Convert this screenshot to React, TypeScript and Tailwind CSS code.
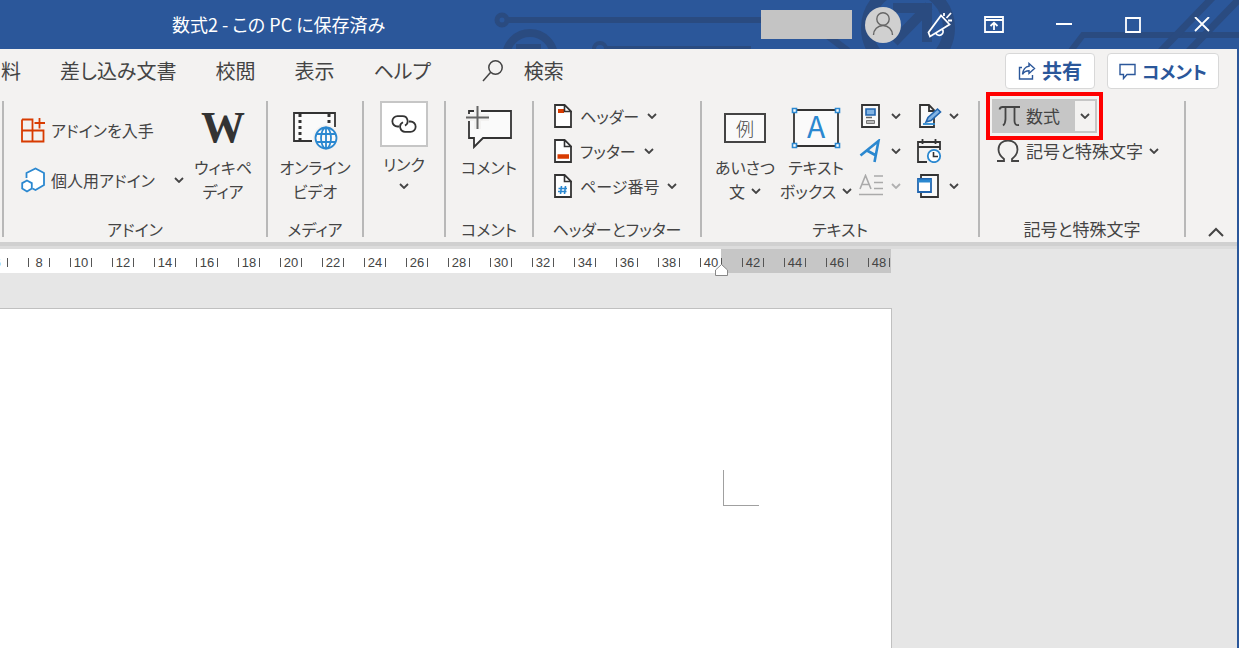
import type { ReactNode } from "react";

const TABS = ["料", "差し込み文書", "校閲", "表示", "ヘルプ"];
const RULER_TEXT = [6, 8, 10, 12, 14, 16, 18, 20, 22, 24, 26, 28, 30, 32, 34, 36, 38, 40];
const RULER_MARGIN = [42, 44, 46, 48];

export default function App() {
  return (
    <div className="flex min-h-screen flex-col overflow-hidden bg-[#e6e6e6] font-['Noto_Sans_CJK_JP',sans-serif] text-base text-[#444] [font-feature-settings:'palt']">
      <TitleBar />
      <div className="flex flex-1 flex-col border-r-2 border-[#2b579a]">
        <TabBar />
        <Ribbon />
        <Ruler />
        <main className="flex flex-1 pt-[35px]">
          <div className="w-[892px] border-t border-r border-[#c0c0c0] bg-white pt-[161px]">
            {/* crop mark at the margin corner */}
            <div className="ml-[723px] h-9 w-9 border-b border-l border-[#a0a0a0]" />
          </div>
        </main>
      </div>
    </div>
  );
}

function TitleBar() {
  return (
    <header className="relative flex h-[49px] items-center overflow-hidden bg-[#2b579a] pl-[172px] text-white">
      <svg className="absolute top-0 right-0" width="779" height="49" viewBox="460 0 779 49" fill="none" stroke="#2a4b80">
        <circle cx="502" cy="20" r="5" strokeWidth="5" />
        <path d="M508 20H780" strokeWidth="6" />
        <circle cx="530" cy="57" r="24" strokeWidth="8" />
        <path d="M516 47h25M606 49h145" strokeWidth="6" />
        <circle cx="600" cy="49" r="6" strokeWidth="4" />
        <path d="M828 36l20 15" strokeWidth="7" />
        <circle cx="908" cy="28" r="41" strokeWidth="12" />
        <path d="M893 8h34v34M929 6l-35 36" strokeWidth="10" />
        <path d="M1070 52l13-17h156" strokeWidth="6" />
        <path d="M1160 52l54-56M1188 52l54-56" strokeWidth="7" />
      </svg>
      <h1 className="relative pb-0.5 text-lg">数式2 - この PC に保存済み</h1>
      <div className="relative ml-auto flex items-center">
        <div className="h-[29px] w-[91px] bg-[#c4c4c4]" />
        <button aria-label="アカウント" className="ml-[13px] flex size-9 items-center justify-center rounded-full bg-[#d0d0d0]">
          <svg width="24" height="26" viewBox="0 0 24 26" fill="none" stroke="#666" strokeWidth="1.4">
            <circle cx="12" cy="7" r="6.2" />
            <path d="M2.500 23a9.500 9.500 0 0 1 19 0" />
          </svg>
        </button>
        <button aria-label="近日公開の機能" className="ml-[26px]">
          <svg width="26" height="28" viewBox="0 0 26 28" fill="none" stroke="#fff" strokeWidth="1.8">
            <path d="M14 4.500L1.500 21.500l1.500 4L22.500 13.500zM9 22.500a3.300 3.300 0 0 0 6.500-4M17 5V2M19.500 7l4.500-5M21 9.500h4" />
          </svg>
        </button>
        <button aria-label="リボンの表示オプション" className="ml-[31px]">
          <svg width="20" height="17" viewBox="0 0 20 17" fill="none" stroke="#fff" strokeWidth="1.8">
            <path d="M1 1h18v15H1zM1 4h18M10 14V7M6.500 10L10 6.700l3.500 3.300" />
          </svg>
        </button>
        <button aria-label="最小化" className="ml-[51px]">
          <svg width="18" height="18" viewBox="0 0 18 18" stroke="#fff" strokeWidth="2">
            <path d="M1 8h16" />
          </svg>
        </button>
        <button aria-label="元に戻す" className="ml-[52px]">
          <svg width="16" height="16" viewBox="0 0 16 16" fill="none" stroke="#fff" strokeWidth="1.8">
            <path d="M1 1h14v14H1z" />
          </svg>
        </button>
        <button aria-label="閉じる" className="mr-[29px] ml-[53px]">
          <svg width="16" height="16" viewBox="0 0 16 16" stroke="#fff" strokeWidth="1.8">
            <path d="M1 0l14 14M15 0L1 14" />
          </svg>
        </button>
      </div>
    </header>
  );
}

function TabBar() {
  return (
    <nav className="flex h-[46px] items-center bg-[#f3f2f1] pb-0.5 pl-px text-xl">
      <div className="flex gap-[39px]">
        {TABS.map((tab) => (
          <button key={tab}>{tab}</button>
        ))}
      </div>
      <button className="ml-[51px] flex items-center gap-5">
        <svg width="22" height="22" viewBox="0 0 22 22" fill="none" stroke="#444" strokeWidth="1.500">
          <circle cx="13.500" cy="7.500" r="6.700" />
          <path d="M8.700 12.300L1 21" />
        </svg>
        検索
      </button>
      <div className="mr-[18px] ml-auto flex gap-3 font-bold text-[#2b579a]">
        <button className="flex h-9 w-[90px] items-center justify-center gap-1.5 rounded-sm border border-[#d8d8d8] bg-white">
          <svg width="18" height="18" viewBox="0 0 18 18" fill="none" stroke="#2b579a" strokeWidth="1.400">
            <path d="M4 5.500H1.500V17h13v-4M11 1.500l5.500 5-5.500 5V8.800c-3 0-5 1-6.500 3.500.3-4.500 3-8 6.500-8z" />
          </svg>
          共有
        </button>
        <button className="flex h-9 w-[112px] items-center justify-center gap-1.5 rounded-sm border border-[#d8d8d8] bg-white text-lg">
          <svg width="17" height="17" viewBox="0 0 17 17" fill="none" stroke="#2b579a" strokeWidth="1.400">
            <path d="M1 1.500h15v10H8L4.500 15.500v-4H1z" />
          </svg>
          コメント
        </button>
      </div>
    </nav>
  );
}

function Ribbon() {
  return (
    <section className="flex border-b-4 border-[#d0d0d0] bg-[#f3f2f1] pt-1.5 pb-[5px]">
      <Group label="アドイン" className="ml-0.5 w-[264px]">
        <div className="w-[184px] pt-1 pl-[17px]">
          <button className="flex h-[50px] items-center gap-1.5">
            <svg width="24" height="26" viewBox="0 0 24 26" fill="none" stroke="#d83b01" strokeWidth="1.8">
              <path d="M1 2.500h10.500v22M1 2.500v22h21.500V13.500H1M18.500 1v10.500M13.500 6H24" />
            </svg>
            アドインを入手
          </button>
          <button className="flex h-[50px] w-[163px] items-center gap-1.5">
            <svg width="24" height="26" viewBox="0 0 24 26" fill="#fff" stroke="#2b88d0" strokeWidth="1.8">
              <path d="M5.500 11V6L14.500 1.500 23 6v12L14.500 23l-3-1.500" />
              <path d="M6 13.500l4.800 2.600v5.500L6 24.500l-4.800-2.900v-5.500z" />
            </svg>
            個人用アドイン
            <Chevron className="ml-auto" />
          </button>
        </div>
        <BigButton
          className="w-[70px]"
          icon={<span className="font-['Liberation_Serif',serif] text-[44px] leading-[54px] font-bold text-[#333]">W</span>}
          lines={["ウィキペ", "ディア"]}
        />
      </Group>

      <Group label="メディア" className="w-24">
        <BigButton
          className="w-full"
          icon={
            <svg width="46" height="44" viewBox="0 0 46 44" fill="none">
              <path d="M2 7h41v28H2z" fill="#fafafa" />
              <path d="M20 35H2V7h41v14" stroke="#333" strokeWidth="1.8" />
              <path d="M8 8v27M37 8v10" stroke="#333" strokeWidth="3" strokeDasharray="3 3" />
              <g stroke="#2b88d0" strokeWidth="1.8">
                <circle cx="34" cy="32" r="13" fill="#f3f2f1" stroke="none" />
                <circle cx="34" cy="32" r="10.500" fill="#fafafa" />
                <ellipse cx="34" cy="32" rx="5" ry="10.500" />
                <path d="M34 21v22M25 28h18M25 36h18" />
              </g>
            </svg>
          }
          lines={["オンライン", "ビデオ"]}
        />
      </Group>

      <Group label="" className="w-[82px]">
        <button className="flex w-full flex-col items-center leading-[34px]">
          <span className="flex h-[46px] w-12 items-center justify-center border-2 border-[#c6c6c6] bg-white">
            <svg width="26" height="18" viewBox="0 0 26 18" fill="none" stroke="#333" strokeWidth="1.8">
              <path d="M8 11.500H6.500a5 5 0 0 1 0-10.300h5a5 5 0 0 1 2.500 9.400M18 6.500h1.500a5 5 0 0 1 0 10.300h-5a5 5 0 0 1-2.500-9.500" />
            </svg>
          </span>
          リンク
          <Chevron className="mt-0.5" />
        </button>
      </Group>

      <Group label="コメント" className="w-[88px]">
        <BigButton
          className="w-full"
          icon={
            <svg width="48" height="46" viewBox="0 0 48 46" fill="none" strokeWidth="1.8">
              <path d="M4 6h42v27H18L9 42v-9H4z" fill="#fafafa" stroke="#333" />
              <path d="M12.500 0v24M0 12.500h24" stroke="#f3f2f1" strokeWidth="7" />
              <path d="M12.500 1v23M1 12.500h23" stroke="#666" strokeWidth="2" />
            </svg>
          }
          lines={["コメント"]}
        />
      </Group>

      <Group label="ヘッダーとフッター" className="w-[168px]">
        <div className="flex flex-col gap-[5px] pl-5">
          <SmallButton label="ヘッダー" icon={<PageIcon><path d="M4 7h6" stroke="#d83b01" strokeWidth="4" /></PageIcon>} />
          <SmallButton label="フッター" icon={<PageIcon><path d="M3.500 17.500h11.500" stroke="#d83b01" strokeWidth="4.500" /></PageIcon>} />
          <SmallButton
            label="ページ番号"
            icon={<PageIcon><path d="M7.500 12l-1 8M11.500 12l-1 8M4.500 14.500H13M4 17.500h8.500" stroke="#2b88d0" strokeWidth="1.600" /></PageIcon>}
          />
        </div>
      </Group>

      <Group label="テキスト" className="w-[278px]">
        <BigButton
          className="ml-2 w-[70px]"
          icon={<span className="flex h-[30px] w-[42px] items-center justify-center border-2 border-[#444] bg-[#fafafa] text-lg font-light">例</span>}
          lines={["あいさつ", "文"]}
          menu
        />
        <BigButton
          className="w-[72px]"
          icon={
            <svg className="overflow-visible" width="50" height="42" viewBox="0 0 50 42" fill="none">
              <path d="M3 3h44v36H3z" fill="#fafafa" stroke="#333" strokeWidth="1.8" />
              <text x="25" y="31" textAnchor="middle" fill="#2b88d0" fontSize="30">A</text>
              <path d="M1.500 1.500h4v4h-4zM44.500 1.500h4v4h-4zM1.500 36.500h4v4h-4zM44.500 36.500h4v4h-4z" fill="#fff" stroke="#2b88d0" strokeWidth="1.600" />
            </svg>
          }
          lines={["テキスト", "ボックス"]}
          menu
        />
        <div className="ml-[7px] flex flex-col gap-[5px]">
          <IconMenu label="クイック パーツ">
            <path d="M3 1h17v22H3z" fill="#fafafa" stroke="#333" strokeWidth="1.8" />
            <path d="M7 5h9v6H7z" fill="#83b4e3" stroke="#2266b0" strokeWidth="1.600" />
            <path d="M7 13.500h6" stroke="#666" strokeWidth="1.500" />
            <path d="M7.500 16.500h8v3h-8z" fill="#bbb" stroke="#777" />
          </IconMenu>
          <IconMenu label="ワードアート">
            <path d="M1.500 16.500L19.500 2 15.500 23M8 11.500l9 5" stroke="#2b88d0" strokeWidth="2.600" />
          </IconMenu>
          <IconMenu label="ドロップ キャップ" disabled>
            <path d="M1 15L6.500 1.500 12 15M3 10.500h7M15 2h9M15 8.500h9M15 14.500h9M0 20.500h24" stroke="#aaa" strokeWidth="1.600" />
          </IconMenu>
        </div>
        <div className="ml-4 flex flex-col gap-[5px]">
          <IconMenu label="署名欄">
            <path d="M3 1h9l5 5v17H3zM12 1v6h5" fill="#fafafa" stroke="#333" strokeWidth="1.8" />
            <path d="M6 20h12" stroke="#2b88d0" strokeWidth="1.8" />
            <path d="M9 18l2-4.500L20.500 5l3 3-9.500 8.500z" fill="#83b4e3" stroke="#2266b0" strokeWidth="1.600" />
          </IconMenu>
          <IconMenu label="日付と時刻" plain>
            <path d="M10 23H1V3h22v8M1 8h22M5.500 0v5M18.500 0v5" stroke="#333" strokeWidth="1.8" />
            <circle cx="17" cy="17" r="6.200" fill="#fff" stroke="#2b88d0" strokeWidth="1.8" />
            <path d="M16.500 13v4.500H21" stroke="#333" strokeWidth="1.600" />
          </IconMenu>
          <IconMenu label="オブジェクト">
            <path d="M4 4V1h17v22H4v-4" fill="#fafafa" stroke="#333" strokeWidth="1.8" />
            <path d="M1 5h13v13H1z" fill="#fff" stroke="#2266b0" strokeWidth="1.8" />
            <path d="M1 7h13" stroke="#2b88d0" strokeWidth="3" />
          </IconMenu>
        </div>
      </Group>

      <Group label="記号と特殊文字" className="w-[206px] text-[17px]">
        <div className="flex flex-col gap-[5px] pl-3">
          <div className="flex h-[30px] items-center">
            <div className="relative z-10 flex h-[34px] w-[105px] border-2 border-[#c6c6c6] bg-[#c6c6c6]">
              <button className="flex flex-1 items-center gap-1 pl-1 leading-5">
                <svg width="24" height="24" viewBox="0 0 24 24" fill="none" stroke="#444" strokeWidth="1.8">
                  <path d="M1.500 5.500C2 3.500 3 3 4.500 3H22M7.500 3v12c0 3-.5 5-2.500 6.500M16.500 3v14c0 3 1.500 4.500 4.500 4" />
                </svg>
                数式
              </button>
              <button aria-label="数式の一覧" className="flex w-5 items-center justify-center bg-[#f3f2f1]">
                <Chevron />
              </button>
              <div className="pointer-events-none absolute -inset-x-2 -inset-y-[9px] border-4 border-[#f00]" />
            </div>
          </div>
          <button className="flex h-[30px] items-center gap-1.5 pl-1 whitespace-nowrap">
            <svg width="24" height="24" viewBox="0 0 24 24" fill="none" stroke="#444" strokeWidth="1.8">
              <path d="M1 22h7v-2c-4-3-5.500-6-5.500-9.500C2.500 5 6.500 1.500 12 1.500s9.500 3.500 9.500 9C21.500 14 20 17 16 20v2h7" />
            </svg>
            記号と特殊文字
            <Chevron />
          </button>
        </div>
      </Group>

      <div className="flex h-[136px] flex-1 items-end justify-end border-l-2 border-[#b8b8b8] pr-[13px]">
        <button aria-label="リボンを折りたたむ">
          <svg width="16" height="10" viewBox="0 0 16 10" fill="none" stroke="#444" strokeWidth="2">
            <path d="M1 9l7-7 7 7" />
          </svg>
        </button>
      </div>
    </section>
  );
}

function Group({ label, className, children }: { label: string; className: string; children: ReactNode }) {
  return (
    <div className={`flex h-[136px] flex-none flex-col border-l-2 border-[#b8b8b8] ${className}`}>
      <div className="flex flex-1 items-start">{children}</div>
      <div className="text-center leading-4 whitespace-nowrap">{label}</div>
    </div>
  );
}

function BigButton({ icon, lines, menu, className }: { icon: ReactNode; lines: string[]; menu?: boolean; className: string }) {
  return (
    <button className={`flex flex-col items-center leading-6 whitespace-nowrap ${className}`}>
      <span className="flex h-[54px] items-center justify-center">{icon}</span>
      {lines.map((line, i) => (
        <span key={line} className="flex items-center gap-1.5">
          {line}
          {menu && i === lines.length - 1 && <Chevron />}
        </span>
      ))}
    </button>
  );
}

function SmallButton({ label, icon }: { label: string; icon: ReactNode }) {
  return (
    <button className="flex h-[30px] items-center gap-2 whitespace-nowrap">
      {icon}
      {label}
      <Chevron />
    </button>
  );
}

function IconMenu({ label, children, disabled, plain }: { label: string; children: ReactNode; disabled?: boolean; plain?: boolean }) {
  return (
    <button aria-label={label} disabled={disabled} className="flex h-[30px] items-center gap-1.5 disabled:text-[#b0b0b0]">
      <svg width="26" height="24" viewBox="0 0 26 24" fill="none">
        {children}
      </svg>
      {!plain && <Chevron />}
    </button>
  );
}

function PageIcon({ children }: { children: ReactNode }) {
  return (
    <svg width="18" height="24" viewBox="0 0 18 24" fill="none">
      <path d="M1 1h9.500L17 7.500V23H1z" fill="#fff" stroke="#333" strokeWidth="1.8" />
      {children}
      <path d="M10.500 1v6.500H17z" fill="#fff" stroke="#333" strokeWidth="1.600" />
    </svg>
  );
}

function Chevron({ className = "" }: { className?: string }) {
  return (
    <svg className={`flex-none ${className}`} width="10" height="6" viewBox="0 0 10 6" fill="none" stroke="currentColor" strokeWidth="1.8">
      <path d="M1 1l4 4 4-4" />
    </svg>
  );
}

function Ruler() {
  return (
    <div className="flex h-[27px] border-t-[3px] border-[#dcdcdc] font-['Liberation_Sans',sans-serif] text-[13px]">
      <div className="relative w-[721px] flex-none bg-white">
        <div className="-ml-3.5 flex h-full items-center gap-5 pt-[3px]">
          {RULER_TEXT.map((n) => (
            <RulerNumber key={n} n={n} />
          ))}
        </div>
        <svg className="absolute top-[15px] -right-[7px] z-10" width="13" height="12" viewBox="0 0 13 12" fill="#fff" stroke="#888">
          <path d="M.5 11.500V6l6-5.500 6 5.500v5.500z" />
        </svg>
      </div>
      <div className="flex w-[170px] items-center gap-5 bg-[#c6c6c6] pt-[3px] pl-[21px]">
        {RULER_MARGIN.map((n) => (
          <RulerNumber key={n} n={n} />
        ))}
      </div>
    </div>
  );
}

function RulerNumber({ n }: { n: number }) {
  return (
    <span className="relative z-10 flex h-[9px] w-[22px] flex-none items-center justify-center border-x border-[#555] leading-none">
      {n}
    </span>
  );
}
